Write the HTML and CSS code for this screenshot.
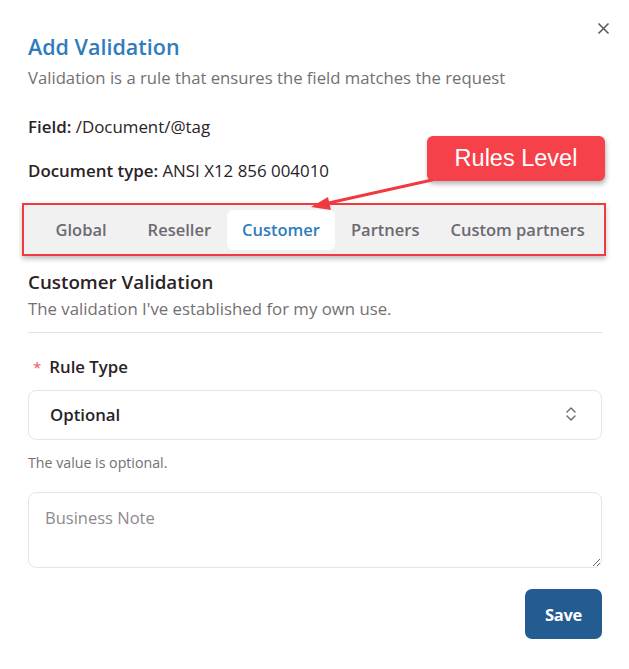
FILE: index.html
```html
<!DOCTYPE html>
<html>
<head>
<meta charset="utf-8">
<link rel="stylesheet" href="styles.css">
</head>
<body>
<div class="dialog">
  <button class="close" aria-label="Close">
    <svg width="13" height="13" viewBox="0 0 13 13"><path d="M1.5 1.5L11.5 11.5M11.5 1.5L1.5 11.5" stroke="#5a5558" stroke-width="1.5" fill="none"/></svg>
  </button>
  <h1 class="title">Add Validation</h1>
  <p class="subtitle">Validation is a rule that ensures the field matches the request</p>
  <p class="meta field"><b>Field:</b> /Document/@tag</p>
  <p class="meta doctype"><b>Document type:</b> ANSI X12 856 004010</p>

  <div class="tabs">
    <span class="tab first">Global</span>
    <span class="tab">Reseller</span>
    <span class="tab active">Customer</span>
    <span class="tab">Partners</span>
    <span class="tab">Custom partners</span>
  </div>

  <h2 class="section">Customer Validation</h2>
  <p class="section-desc">The validation I've established for my own use.</p>
  <div class="divider"></div>

  <label class="label"><span class="req">*</span>Rule Type</label>
  <div class="select">
    <span>Optional</span>
    <svg width="12" height="16" viewBox="0 0 12 16"><path d="M2 6L6 2L10 6M2 10L6 14L10 10" stroke="#6f676b" stroke-width="1.4" fill="none" stroke-linecap="round" stroke-linejoin="round"/></svg>
  </div>
  <p class="help">The value is optional.</p>

  <textarea class="note" placeholder="Business Note"></textarea>

  <div class="actions">
    <button class="save">Save</button>
  </div>

  <div class="callout">Rules Level</div>
  <svg class="arrow" width="140" height="40" viewBox="0 0 140 40">
    <line x1="132" y1="3" x2="24" y2="27" stroke="#f13a40" stroke-width="3" stroke-linecap="round"/>
    <path d="M11 30L28 20L31 33Z" fill="#f13a40"/>
  </svg>
</div>
</body>
</html>
```
FILE: styles.css
```css
* { box-sizing: border-box; }
html, body { margin: 0; padding: 0; background: #fff; }
body { font-family: "Open Sans", "Noto Sans", sans-serif; color: #2a2326; }

.dialog {
  position: relative;
  width: 629px;
  height: 669px;
  padding: 33px 27px 0 28px;
}

.close {
  position: absolute;
  top: 22px;
  left: 597px;
  border: 0;
  background: none;
  padding: 0;
  width: 13px;
  height: 13px;
  line-height: 0;
}

.title {
  margin: 0;
  font-size: 21.5px;
  line-height: 28px;
  font-weight: 600;
  color: #2f7cbd;
}

.subtitle {
  margin: 6px 0 0;
  font-size: 16.7px;
  line-height: 22px;
  color: #737073;
}

.meta {
  margin: 0;
  font-size: 16.9px;
  line-height: 22px;
  color: #2a2326;
}
.meta b { font-weight: 600; }
.field { margin-top: 27px; }
.doctype { margin-top: 22px; }

.tabs {
  margin: 21px -4px 0 -6px;
  height: 53px;
  border: 2.5px solid #f23b41;
  background: #f1f1f1;
  box-shadow: 0 3px 5px rgba(0,0,0,0.25);
  display: flex;
  align-items: center;
  padding: 0 0 0 16px;
  overflow: hidden;
}

.tab {
  flex-shrink: 0;
  white-space: nowrap;
  height: 40px;
  display: flex;
  align-items: center;
  padding: 0 15.5px;
  font-size: 16.5px;
  font-weight: 600;
  color: #6c6a70;
  border-radius: 6px;
}
.tab.first { margin-right: 10px; }
.tab.active {
  background: #fff;
  color: #2f7cbd;
}

.section {
  margin: 14px 0 0;
  font-size: 18.8px;
  line-height: 24px;
  font-weight: 600;
  color: #2a2326;
}

.section-desc {
  margin: 4px 0 0;
  font-size: 16.8px;
  line-height: 22px;
  color: #737073;
}

.divider {
  margin-top: 12px;
  height: 1px;
  background: #e2e0e0;
}

.label {
  display: flex;
  align-items: center;
  margin-top: 23px;
  font-size: 16.8px;
  line-height: 22px;
  font-weight: 600;
  color: #2a2326;
}
.req {
  color: #f0555a;
  font-size: 15px;
  font-weight: 400;
  margin: 0 8px 0 5px;
}

.select {
  margin-top: 12px;
  height: 50px;
  border: 1px solid #e6e4e4;
  border-radius: 8px;
  display: flex;
  align-items: center;
  justify-content: space-between;
  padding: 0 24px 2px 21px;
  font-size: 16.8px;
  font-weight: 600;
  color: #2a2326;
}

.help {
  margin: 13px 0 0;
  font-size: 14.2px;
  line-height: 20px;
  color: #737073;
}

.note {
  display: block;
  margin-top: 19px;
  width: 100%;
  height: 76px;
  border: 1px solid #e6e4e4;
  border-radius: 8px;
  padding: 13px 16px;
  font-family: "Open Sans", "Noto Sans", sans-serif;
  font-size: 16.5px;
  color: #2a2326;
  resize: vertical;
  outline: none;
}
.note::placeholder { color: #8d8a8e; }

.actions {
  display: flex;
  justify-content: flex-end;
  margin-top: 21px;
}

.save {
  width: 77px;
  height: 50px;
  border: 0;
  border-radius: 7px;
  background: #245c91;
  color: #fff;
  font-family: "Open Sans", "Noto Sans", sans-serif;
  font-size: 16.5px;
  font-weight: 700;
  letter-spacing: -0.3px;
}

.callout {
  position: absolute;
  left: 427px;
  top: 136px;
  width: 178px;
  height: 45px;
  background: #f6404a;
  border-radius: 6px;
  box-shadow: 1px 3px 5px rgba(0,0,0,0.3);
  color: #fff;
  font-family: "Liberation Sans", Arial, sans-serif;
  font-size: 23.5px;
  display: flex;
  align-items: center;
  justify-content: center;
}

.arrow {
  position: absolute;
  left: 300px;
  top: 177px;
}
```
